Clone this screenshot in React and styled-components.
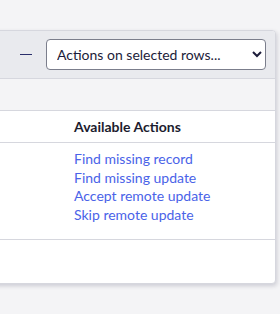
import styled, { createGlobalStyle } from 'styled-components';

const GlobalStyle = createGlobalStyle`
  html, body {
    margin: 0;
    padding: 0;
    background: #f4f4f6;
    font-family: 'Lato', 'Noto Sans', sans-serif;
  }
`;

const actions = [
  'Find missing record',
  'Find missing update',
  'Accept remote update',
  'Skip remote update',
];

const App = () => {
  return (
    <Page>
      <GlobalStyle />
      <Card>
        <Toolbar>
          <Dash />
          <Select defaultValue='none'>
            <option value='none'>Actions on selected rows...</option>
          </Select>
        </Toolbar>
        <FilterRow />
        <Table>
          <thead>
            <tr>
              <HeadCell>Available Actions</HeadCell>
            </tr>
          </thead>
          <tbody>
            <tr>
              <BodyCell>
                {actions.map((a) => (
                  <ActionLink key={a} href='#'>
                    {a}
                  </ActionLink>
                ))}
              </BodyCell>
            </tr>
          </tbody>
        </Table>
        <Footer />
      </Card>
    </Page>
  );
};

const Page = styled.div`
  padding: 30px 4px 30px 0;
  height: 314px;
  box-sizing: border-box;
`;

const Card = styled.div`
  margin-left: -10px;
  background: #ffffff;
  border: 1px solid #d6d7de;
  border-radius: 0 4px 4px 0;
  box-shadow: 1px 2px 4px rgba(30, 30, 60, 0.18);
  overflow: hidden;
`;

const Toolbar = styled.div`
  display: flex;
  justify-content: flex-end;
  align-items: center;
  gap: 14px;
  height: 47px;
  padding-right: 9px;
  background: #e9eaee;
  border-bottom: 1px solid #d6d7de;
`;

const Dash = styled.span`
  display: block;
  width: 12px;
  height: 1px;
  background: #2a2f6b;
`;

const Select = styled.select`
  width: 220px;
  height: 31px;
  padding: 0 6px 0 6px;
  border: 1px solid #7b7e8c;
  border-radius: 4px;
  background: #ffffff;
  color: #1c1c3a;
  font-family: 'Lato', sans-serif;
  font-size: 14px;
`;

const FilterRow = styled.div`
  height: 31px;
  background: #f4f4f6;
  border-bottom: 1px solid #d6d7de;
`;

const Table = styled.table`
  width: 100%;
  border-collapse: collapse;
`;

const HeadCell = styled.th`
  text-align: left;
  padding: 0 0 0 83px;
  height: 31px;
  font-size: 14px;
  font-weight: 700;
  color: #1c1c2e;
  border-bottom: 1px solid #d6d7de;
`;

const BodyCell = styled.td`
  padding: 7px 0 15px 83px;
  border-bottom: 1px solid #d6d7de;
  height: 73px;
  vertical-align: top;
`;

const ActionLink = styled.a`
  display: block;
  color: #4a63e8;
  font-size: 14px;
  line-height: 18.5px;
  text-decoration: none;
`;

const Footer = styled.div`
  height: 43px;
`;

export default App;
